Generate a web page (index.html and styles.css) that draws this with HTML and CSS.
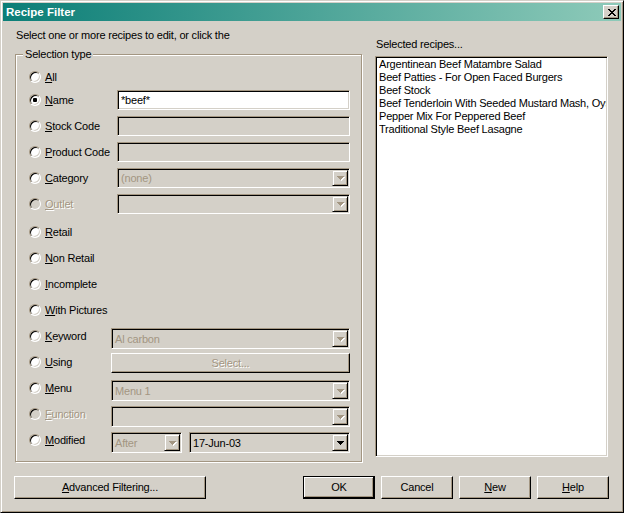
FILE: index.html
```html
<!DOCTYPE html>
<html>
<head>
<meta charset="utf-8">
<title>Recipe Filter</title>
<link rel="stylesheet" href="styles.css">
</head>
<body>
<div class="window">
  <div class="titlebar">
    <span class="title">Recipe Filter</span>
    <span class="close"><svg width="8" height="7" viewBox="0 0 8 7" shape-rendering="crispEdges"><path d="M0 0h2v1h-2z M6 0h2v1h-2z M1 1h2v1h-2z M5 1h2v1h-2z M2 2h4v1h-4z M3 3h2v1h-2z M2 4h4v1h-4z M1 5h2v1h-2z M5 5h2v1h-2z M0 6h2v1h-2z M6 6h2v1h-2z"/></svg></span>
  </div>
  <div class="body">
    <div class="main">
      <div class="left">
        <div class="intro">Select one or more recipes to edit, or click the</div>
        <div class="group">
          <span class="legend">Selection type</span>
          <div class="row row-all"><span class="radio"></span><span class="lbl"><u>A</u>ll</span></div>
          <div class="row"><span class="radio checked"></span><span class="lbl w1"><u>N</u>ame</span><span class="edit white">*beef*</span></div>
          <div class="row"><span class="radio"></span><span class="lbl w1"><u>S</u>tock Code</span><span class="edit"></span></div>
          <div class="row"><span class="radio"></span><span class="lbl w1"><u>P</u>roduct Code</span><span class="edit"></span></div>
          <div class="row"><span class="radio"></span><span class="lbl w1"><u>C</u>ategory</span><span class="combo"><span class="val dim">(none)</span><span class="drop off"><svg width="7" height="4" viewBox="0 0 7 4" shape-rendering="crispEdges"><path d="M0 0h7v1h-1v1h-1v1h-1v1h-1v-1h-1v-1h-1v-1h-1z"/></svg></span></span></div>
          <div class="row"><span class="radio off"></span><span class="lbl w1 dis"><u>O</u>utlet</span><span class="combo"><span class="val"></span><span class="drop off"><svg width="7" height="4" viewBox="0 0 7 4" shape-rendering="crispEdges"><path d="M0 0h7v1h-1v1h-1v1h-1v1h-1v-1h-1v-1h-1v-1h-1z"/></svg></span></span></div>
          <div class="row row-gap"><span class="radio"></span><span class="lbl"><u>R</u>etail</span></div>
          <div class="row"><span class="radio"></span><span class="lbl"><u>N</u>on Retail</span></div>
          <div class="row"><span class="radio"></span><span class="lbl"><u>I</u>ncomplete</span></div>
          <div class="row"><span class="radio"></span><span class="lbl"><u>W</u>ith Pictures</span></div>
          <div class="row"><span class="radio"></span><span class="lbl w2"><u>K</u>eyword</span><span class="combo low"><span class="val dim">Al carbon</span><span class="drop off"><svg width="7" height="4" viewBox="0 0 7 4" shape-rendering="crispEdges"><path d="M0 0h7v1h-1v1h-1v1h-1v1h-1v-1h-1v-1h-1v-1h-1z"/></svg></span></span></div>
          <div class="row"><span class="radio"></span><span class="lbl w2"><u>U</u>sing</span><span class="btn sel">Select...</span></div>
          <div class="row"><span class="radio"></span><span class="lbl w2"><u>M</u>enu</span><span class="combo low"><span class="val dim">Menu 1</span><span class="drop off"><svg width="7" height="4" viewBox="0 0 7 4" shape-rendering="crispEdges"><path d="M0 0h7v1h-1v1h-1v1h-1v1h-1v-1h-1v-1h-1v-1h-1z"/></svg></span></span></div>
          <div class="row"><span class="radio off"></span><span class="lbl w2 dis"><u>F</u>unction</span><span class="combo low"><span class="val"></span><span class="drop off"><svg width="7" height="4" viewBox="0 0 7 4" shape-rendering="crispEdges"><path d="M0 0h7v1h-1v1h-1v1h-1v1h-1v-1h-1v-1h-1v-1h-1z"/></svg></span></span></div>
          <div class="row"><span class="radio"></span><span class="lbl w2"><u>M</u>odified</span>
            <span class="pair">
              <span class="combo low after"><span class="val dim">After</span><span class="drop off"><svg width="7" height="4" viewBox="0 0 7 4" shape-rendering="crispEdges"><path d="M0 0h7v1h-1v1h-1v1h-1v1h-1v-1h-1v-1h-1v-1h-1z"/></svg></span></span>
              <span class="combo low date"><span class="val">17-Jun-03</span><span class="drop"><svg width="7" height="4" viewBox="0 0 7 4" shape-rendering="crispEdges"><path d="M0 0h7v1h-1v1h-1v1h-1v1h-1v-1h-1v-1h-1v-1h-1z"/></svg></span></span>
            </span>
          </div>
        </div>
      </div>
      <div class="right">
        <div class="caption">Selected recipes...</div>
        <div class="list">
          <div class="items">
            <div class="item">Argentinean Beef Matambre Salad</div>
            <div class="item">Beef Patties - For Open Faced Burgers</div>
            <div class="item">Beef Stock</div>
            <div class="item">Beef Tenderloin With Seeded Mustard Mash, Oyster Mushrooms</div>
            <div class="item">Pepper Mix For Peppered Beef</div>
            <div class="item">Traditional Style Beef Lasagne</div>
          </div>
        </div>
      </div>
    </div>
    <div class="footer">
      <span class="btn adv"><u>A</u>dvanced Filtering...</span>
      <div class="actions">
        <span class="btn act default">OK</span>
        <span class="btn act">Cancel</span>
        <span class="btn act"><u>N</u>ew</span>
        <span class="btn act"><u>H</u>elp</span>
      </div>
    </div>
  </div>
</div>
</body>
</html>
```
FILE: styles.css
```css
:root {
  --face: #d4d0c8;
  --shadow: #a39682;
  --dark: #000000;
  --hi: #ffffff;
}
html, body {
  margin: 0;
  padding: 0;
  background: var(--face);
}
body {
  font-family: "Liberation Sans", Arial, sans-serif;
  font-size: 11px;
  line-height: 13px;
  letter-spacing: -0.2px;
  color: #000;
}
u { text-decoration: underline; text-underline-offset: 1px; }

.window {
  width: 624px;
  height: 513px;
  box-sizing: border-box;
  border: 1px solid;
  border-color: var(--face) var(--dark) var(--dark) var(--face);
  box-shadow: inset 1px 1px 0 var(--hi), inset -1px -1px 0 var(--shadow);
  padding: 2px;
  background: var(--face);
  display: flex;
  flex-direction: column;
}

.titlebar {
  height: 18px;
  flex: none;
  display: flex;
  align-items: center;
  justify-content: space-between;
  padding: 0 2px 0 3px;
  background: linear-gradient(90deg, #0b7e77 0%, #8ecab9 100%);
}
.title {
  color: #fff;
  font-weight: bold;
  font-size: 11.5px;
  line-height: 18px;
  letter-spacing: 0;
}
.close {
  width: 16px;
  height: 14px;
  box-sizing: border-box;
  border: 1px solid;
  border-color: var(--hi) var(--dark) var(--dark) var(--hi);
  box-shadow: inset -1px -1px 0 var(--shadow);
  background: var(--face);
  display: flex;
  align-items: center;
  justify-content: center;
}
.close svg { display: block; fill: #000; margin-left: 1px; }

.body {
  flex: 1;
  display: flex;
  flex-direction: column;
}
.main {
  display: flex;
  align-items: flex-start;
}
.left {
  margin-left: 12px;
  width: 347px;
  padding-top: 8px;
}
.intro {
  padding-left: 1px;
  white-space: nowrap;
}
.group {
  position: relative;
  margin-top: 12px;
  height: 408px;
  box-sizing: border-box;
  border: 1px solid var(--shadow);
  box-shadow: inset 1px 1px 0 var(--hi), 1px 1px 0 var(--hi);
  padding: 12px 11px 0 13px;
}
.legend {
  position: absolute;
  left: 7px;
  top: -7px;
  padding: 0 2px;
  background: var(--face);
  line-height: 13px;
}

.row {
  display: flex;
  align-items: center;
  height: 26px;
}
.row-all { height: 20px; }
.row-gap { margin-top: 2px; }

.radio {
  flex: none;
  position: relative;
  width: 12px;
  height: 12px;
  box-sizing: border-box;
  border-radius: 50%;
  border: 1px solid;
  border-color: var(--shadow) var(--hi) var(--hi) var(--shadow);
  box-shadow: inset 1px 1px 0 var(--dark), inset -1px -1px 0 var(--face);
  background: #fff;
  margin-right: 4px;
}
.radio.off { background: var(--face); }
.radio.checked::after {
  content: "";
  position: absolute;
  left: 3px;
  top: 3px;
  width: 4px;
  height: 4px;
  border-radius: 1px;
  background: #000;
}

.lbl { flex: none; white-space: nowrap; }
.lbl.w1 { width: 72px; }
.lbl.w2 { width: 66px; }
.dis {
  color: var(--shadow);
  text-shadow: 1px 1px 0 var(--hi);
}

.edit, .combo {
  flex: 1;
  height: 20px;
  box-sizing: border-box;
  border: 1px solid;
  border-color: var(--shadow) var(--hi) var(--hi) var(--shadow);
  box-shadow: inset 1px 1px 0 var(--dark), inset -1px -1px 0 var(--face);
  background: var(--face);
}
.edit {
  padding: 0 3px;
  line-height: 18px;
}
.edit.white { background: #fff; }

.combo {
  display: flex;
  padding: 1px;
}
.combo.low {
  align-self: flex-start;
  margin-top: 5px;
  height: 21px;
}
.val {
  flex: 1;
  padding-left: 2px;
  line-height: 17px;
  white-space: nowrap;
  overflow: hidden;
}
.combo.low .val { line-height: 18px; }
.val.dim { color: var(--shadow); }

.drop {
  flex: none;
  width: 16px;
  box-sizing: border-box;
  border: 1px solid;
  border-color: var(--face) var(--dark) var(--dark) var(--face);
  box-shadow: inset 1px 1px 0 var(--hi), inset -1px -1px 0 var(--shadow);
  background: var(--face);
  display: flex;
  align-items: center;
  justify-content: center;
}
.drop svg { display: block; fill: #000; }
.drop.off svg {
  fill: var(--shadow);
  filter: drop-shadow(1px 1px 0 #fff);
}

.pair {
  flex: 1;
  display: flex;
  gap: 7px;
  align-self: stretch;
}
.combo.after { flex: none; width: 71px; }
.combo.date { flex: 1; }

.btn {
  display: flex;
  align-items: center;
  justify-content: center;
  box-sizing: border-box;
  height: 23px;
  border: 1px solid;
  border-color: var(--hi) var(--dark) var(--dark) var(--hi);
  box-shadow: inset -1px -1px 0 var(--shadow), inset 1px 1px 0 var(--face);
  background: var(--face);
  white-space: nowrap;
}
.btn.sel {
  flex: 1;
  align-self: flex-start;
  margin-top: 4px;
  height: 20px;
  color: var(--shadow);
  text-shadow: 1px 1px 0 var(--hi);
}

.right {
  margin-left: 13px;
  width: 233px;
  padding-top: 17px;
}
.caption {
  padding-left: 1px;
}
.list {
  margin-top: 5px;
  height: 401px;
  box-sizing: border-box;
  border: 1px solid;
  border-color: var(--shadow) var(--hi) var(--hi) var(--shadow);
  box-shadow: inset 1px 1px 0 var(--dark), inset -1px -1px 0 var(--face);
  background: #fff;
  padding: 1px 1px 1px 3px;
}
.items {
  overflow: hidden;
}
.item {
  white-space: nowrap;
  line-height: 13px;
}

.footer {
  margin-top: 14px;
  display: flex;
  padding: 0 12px 0 11px;
}
.btn.adv { width: 192px; }
.actions {
  margin-left: auto;
  display: flex;
  gap: 6px;
}
.btn.act { width: 72px; }
.btn.default {
  border-color: var(--dark);
  box-shadow: inset -1px -1px 0 var(--dark), inset 1px 1px 0 var(--hi), inset -2px -2px 0 var(--shadow);
}
```
